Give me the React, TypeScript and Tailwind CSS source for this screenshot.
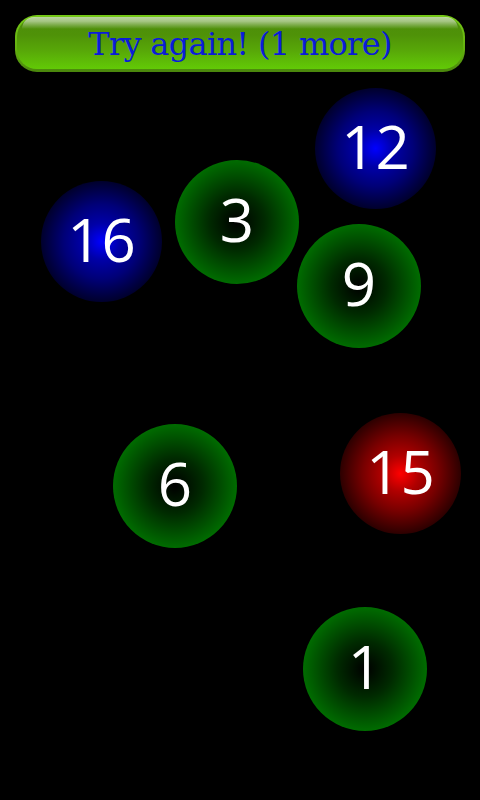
function Ball({ n, x, y, kind }: { n: number; x: number; y: number; kind: "green" | "blue" | "red" }) {
  const cls =
    kind === "green"
      ? "w-[124px] h-[124px] bg-[radial-gradient(circle_closest-side,#000000_0%,#002a00_45%,#006c00_100%)]"
      : kind === "blue"
        ? "w-[121px] h-[121px] bg-[radial-gradient(circle_closest-side,#0000ff_0%,#0000a8_30%,#000078_62%,#00002c_100%)]"
        : "w-[121px] h-[121px] bg-[radial-gradient(circle_closest-side,#ff0000_0%,#b00000_30%,#780000_62%,#2c0000_100%)]";
  return (
    <div
      className={`absolute rounded-full flex items-center justify-center text-white text-[60px] leading-none pb-[6px] font-['Open_Sans','Noto_Sans',sans-serif] ${cls}`}
      style={{ left: x, top: y }}
    >
      {n}
    </div>
  );
}

export default function App() {
  return (
    <div className="relative w-[480px] h-[800px] bg-black overflow-hidden">
      <div className="pt-[15px] px-[15px]">
        <div className="relative h-[57px] w-[450px] rounded-[22px] bg-[linear-gradient(180deg,#74c816_0%,#64b010_60%,#4a860c_100%)] p-[2px] pb-[3px]">
          <div className="h-full rounded-[20px] flex items-center justify-center bg-[linear-gradient(180deg,#4c8c0a_0%,#4f9208_35%,#58a808_65%,#62ca06_100%)]">
            <span className="text-[#0a1cd8] text-[32px] leading-none pt-[2px] font-['DejaVu_Serif',serif] tracking-[-0.7px]">Try again! (1 more)</span>
          </div>
          <div className="absolute top-[2px] left-[7px] right-[7px] h-[12px] rounded-t-[18px] bg-[linear-gradient(180deg,rgba(255,255,255,0.62)_0%,rgba(255,255,255,0.5)_35%,rgba(255,255,255,0)_100%)]" />
        </div>
      </div>
      <Ball n={12} x={315} y={88} kind="blue" />
      <Ball n={3} x={175} y={160} kind="green" />
      <Ball n={9} x={297} y={224} kind="green" />
      <Ball n={16} x={41} y={181} kind="blue" />
      <Ball n={6} x={113} y={424} kind="green" />
      <Ball n={15} x={340} y={413} kind="red" />
      <Ball n={1} x={303} y={607} kind="green" />
    </div>
  );
}
